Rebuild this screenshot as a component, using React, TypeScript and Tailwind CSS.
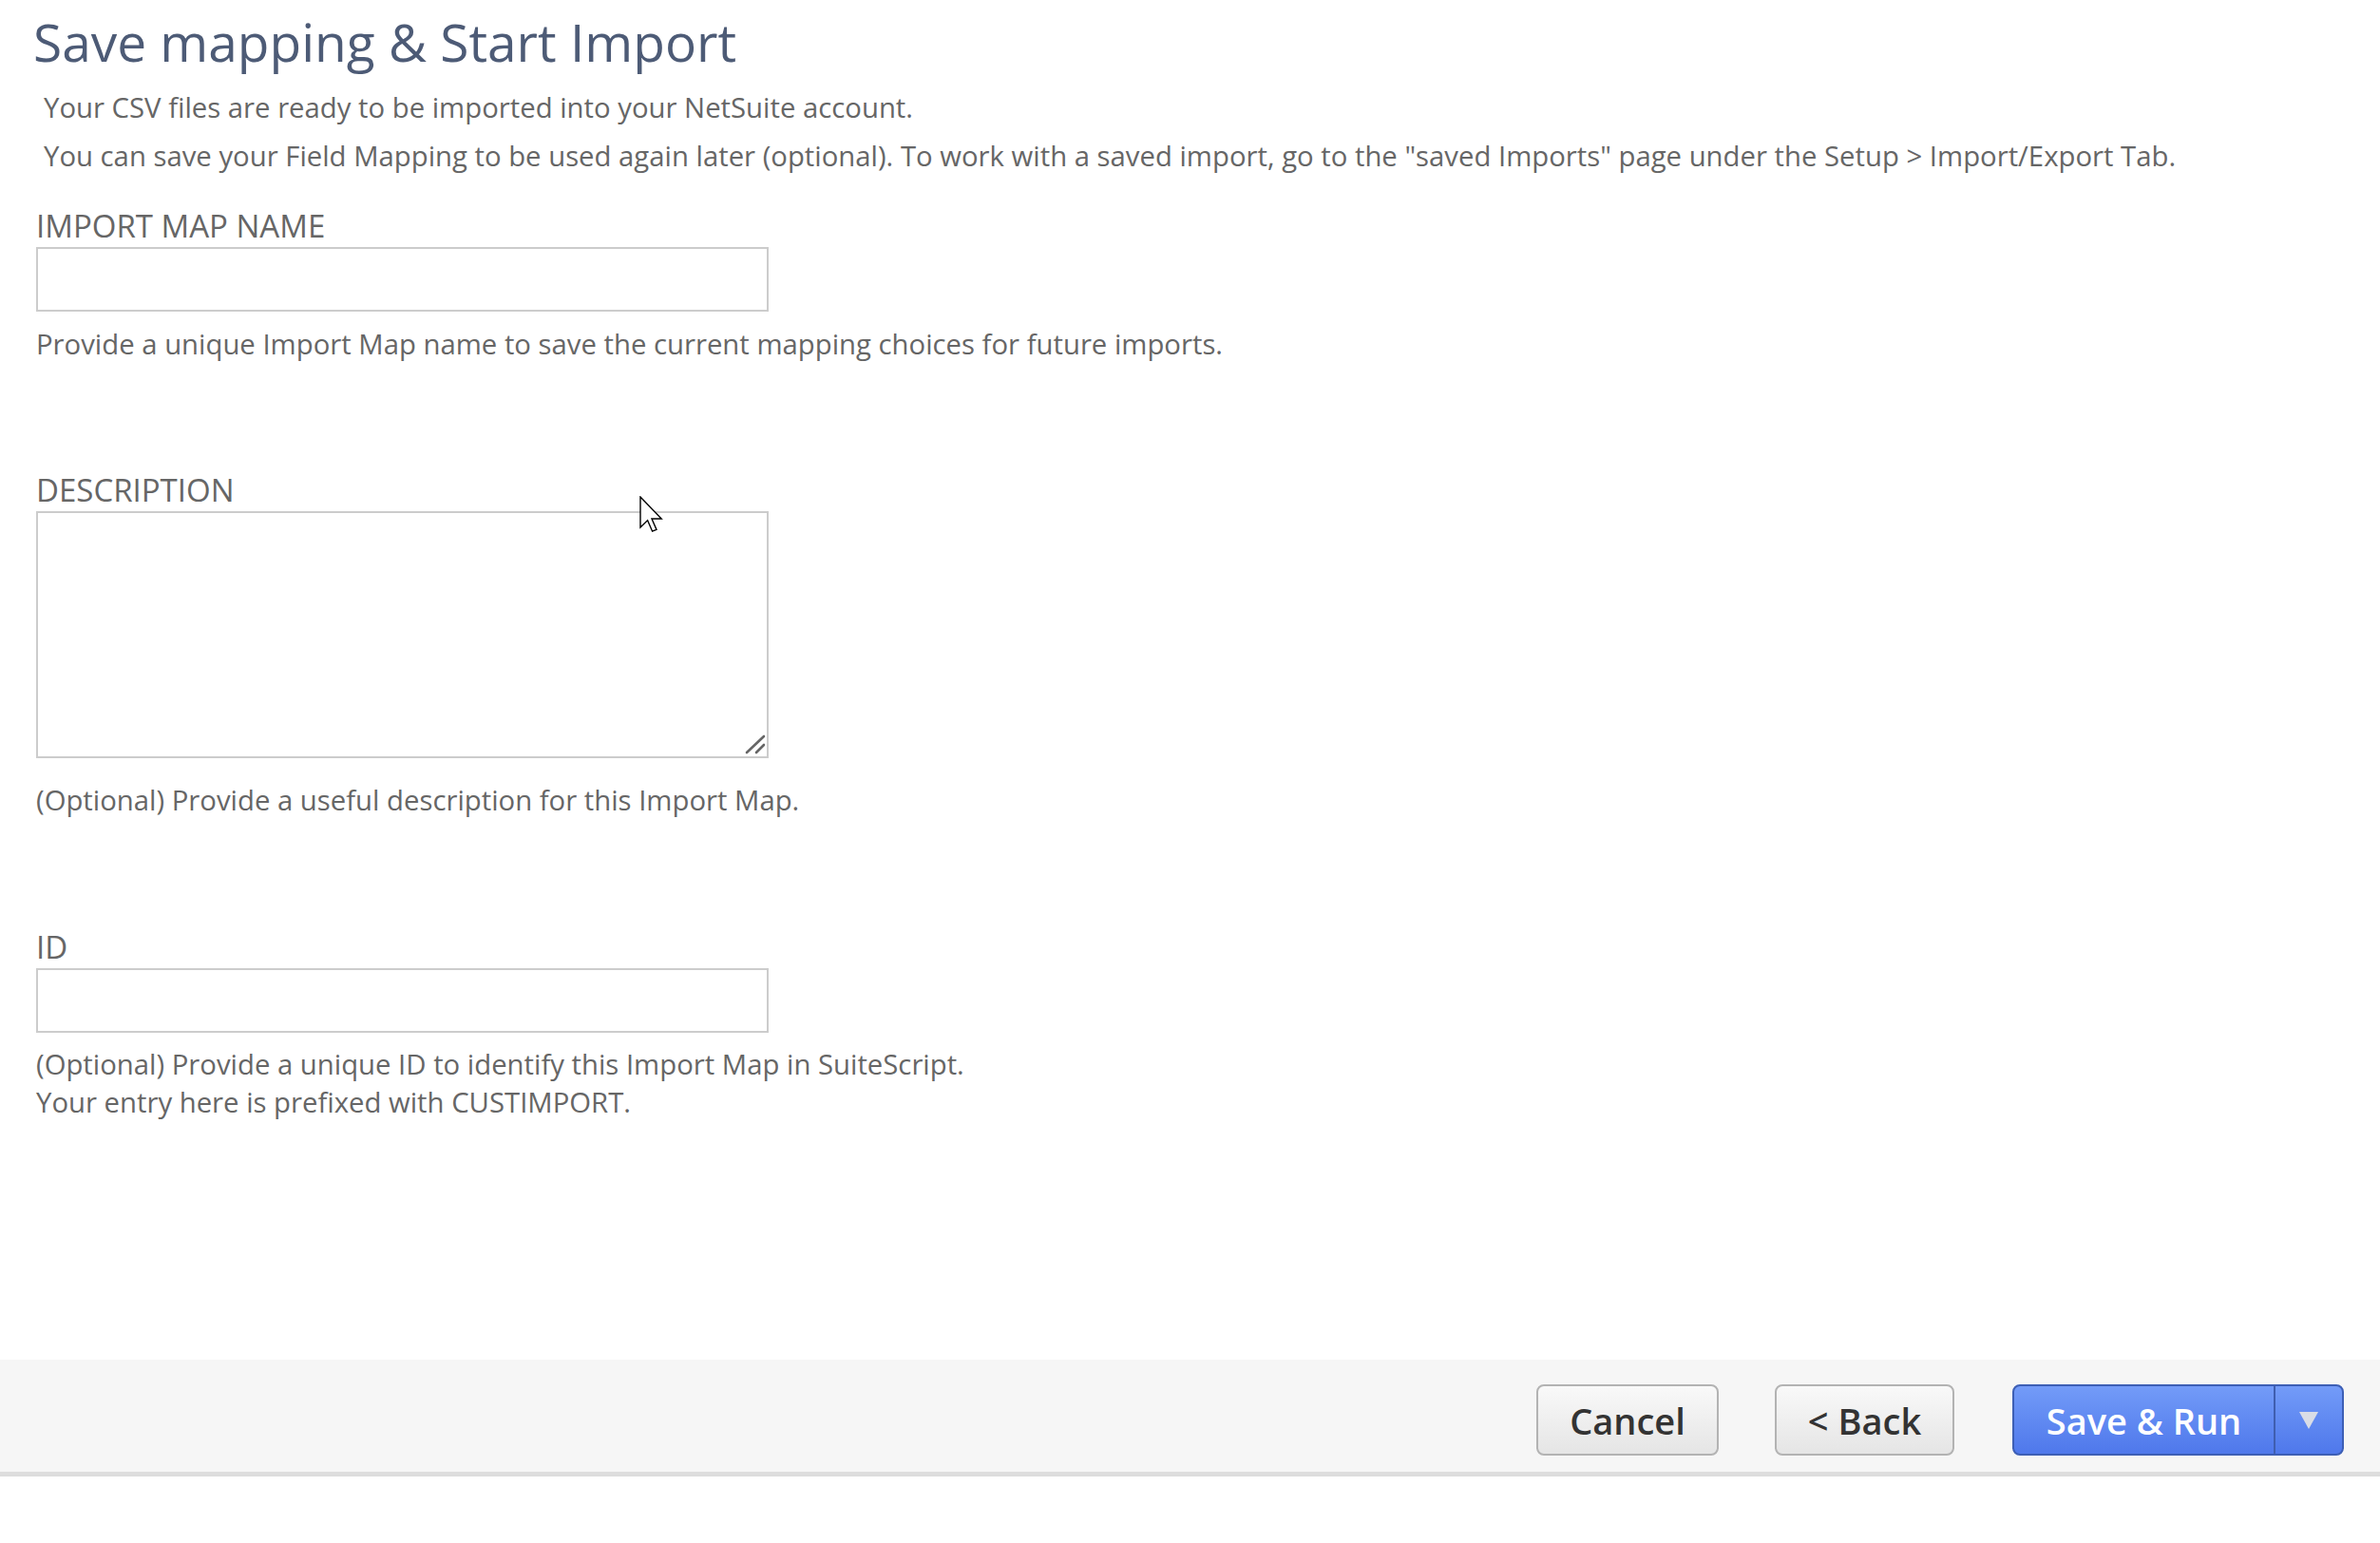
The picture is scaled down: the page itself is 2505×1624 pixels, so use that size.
import React from "react";

const Field = ({
  label,
  children,
  help,
  className = "",
  helpClass = "mt-[14px]",
}: {
  label: string;
  children: React.ReactNode;
  help: React.ReactNode;
  className?: string;
  helpClass?: string;
}) => (
  <div className={className}>
    <div className="text-[33px] leading-[40px] uppercase text-[#666666]">{label}</div>
    <div className="mt-[2px]">{children}</div>
    <div className={`${helpClass} text-[29.3px] leading-[40px] text-[#666666]`}>{help}</div>
  </div>
);

const Cursor = () => (
  <svg
    className="absolute left-[673px] top-[522px]"
    width="26"
    height="40"
    viewBox="0 0 13 20"
  >
    <path
      d="M0.5 0.5 L0.5 16.5 L4.3 12.8 L6.8 18.6 L9 17.7 L6.5 12 L11.6 12 Z"
      fill="#ffffff"
      stroke="#000000"
      strokeWidth="0.7"
      strokeLinejoin="miter"
    />
  </svg>
);

// textarea resize grip
const Grip = () => (
  <svg className="absolute right-[2px] bottom-[2px] pointer-events-none" width="24" height="24" viewBox="0 0 24 24">
    <path d="M3 20 L21 3 M13 20 L21 12" stroke="#666666" strokeWidth="2.6" strokeLinecap="round" />
  </svg>
);

const grayBtn =
  "h-[75px] rounded-[8px] border-2 border-[#b3b3b3] bg-gradient-to-b from-[#f9f9f9] to-[#e5e5e5] text-[38px] font-semibold text-[#333333] leading-none";

export default function App() {
  return (
    <div className="relative min-h-[1624px] bg-white font-['Open_Sans',sans-serif]">
      {/* header */}
      <div className="pl-[35px] pt-[11px]">
        <h1 className="text-[55px] leading-[66px] font-normal text-[#4d5b76]">
          Save mapping &amp; Start Import
        </h1>
      </div>

      <div className="pl-[46px] mt-[11px] text-[29.3px] leading-[51px] text-[#666666]">
        <p>Your CSV files are ready to be imported into your NetSuite account.</p>
        <p>
          You can save your Field Mapping to be used again later (optional). To work with a
          saved import, go to the "saved Imports" page under the Setup &gt; Import/Export Tab.
        </p>
      </div>

      {/* fields */}
      <div className="pl-[38px] mt-[28px]">
        <Field
          label="Import Map Name"
          help="Provide a unique Import Map name to save the current mapping choices for future imports."
        >
          <input
            type="text"
            className="block w-[771px] h-[68px] border-2 border-[#cccccc] bg-white outline-none"
          />
        </Field>

        <Field
          label="Description"
          className="mt-[114px]"
          helpClass="mt-[24px]"
          help="(Optional) Provide a useful description for this Import Map."
        >
          <div className="relative w-[771px]">
            <textarea className="block w-[771px] h-[260px] border-2 border-[#cccccc] bg-white outline-none resize-none" />
            <Grip />
          </div>
        </Field>

        <Field
          label="ID"
          className="mt-[115px]"
          helpClass="mt-[13px]"
          help={
            <>
              <div>(Optional) Provide a unique ID to identify this Import Map in SuiteScript.</div>
              <div>Your entry here is prefixed with CUSTIMPORT.</div>
            </>
          }
        >
          <input
            type="text"
            className="block w-[771px] h-[68px] border-2 border-[#cccccc] bg-white outline-none"
          />
        </Field>
      </div>

      {/* footer buttons */}
      <div className="mt-[251px] h-[123px] bg-[#f6f6f6] border-b-[5px] border-[#dddddd] flex justify-end items-start pt-[26px] pr-[38px]">
        <button className={`${grayBtn} w-[192px]`}>Cancel</button>
        <button className={`${grayBtn} ml-[59px] w-[189px]`}>&lt; Back</button>
        <div className="ml-[61px] flex h-[75px] w-[349px] rounded-[8px] border-2 border-[#3d5fb5] bg-gradient-to-b from-[#739bf8] to-[#4f78eb] overflow-hidden">
          <button className="flex-1 text-[38px] font-semibold text-white leading-none">
            Save &amp; Run
          </button>
          <div className="w-[72px] border-l-2 border-[#3f5eb0] flex items-center justify-center">
            <svg width="22" height="20" viewBox="0 0 22 20">
              <path d="M1 1 L21 1 L11 19 Z" fill="#d9dde6" />
            </svg>
          </div>
        </div>
      </div>

      <Cursor />
    </div>
  );
}
